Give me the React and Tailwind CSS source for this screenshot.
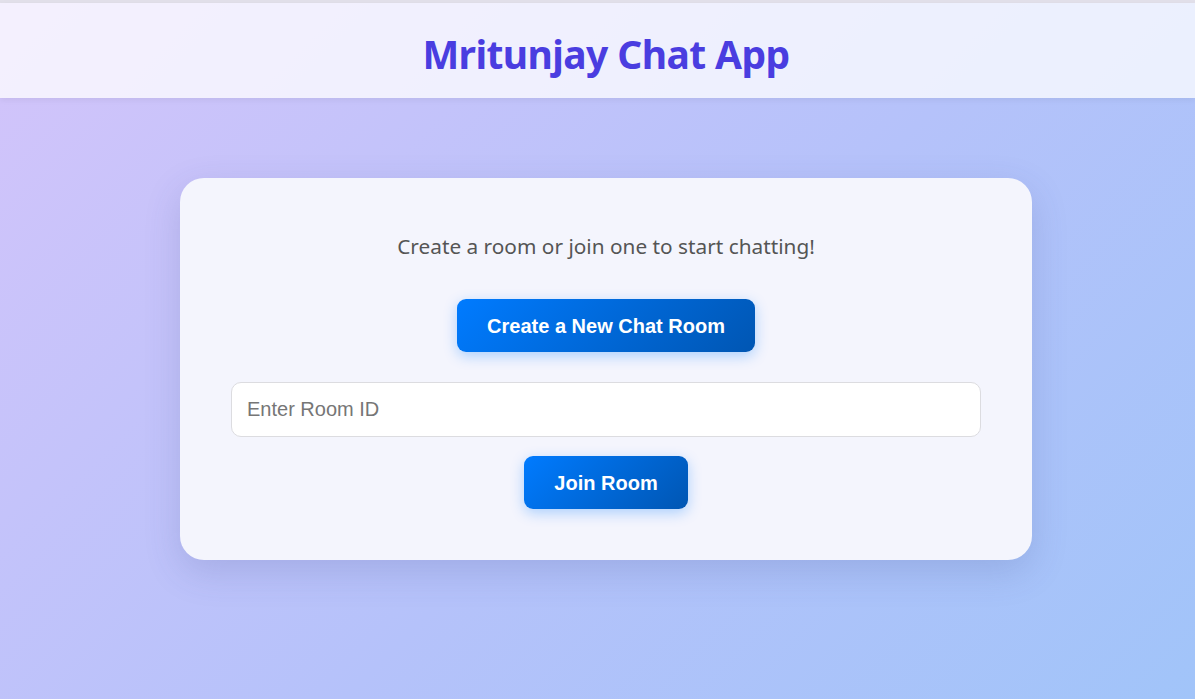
export default function App() {
  return (
    <div className="min-h-[699px] w-full bg-[linear-gradient(135deg,#d3c4fa_0%,#b5c2fa_55%,#a1c4f9_100%)] flex flex-col font-['Noto_Sans',sans-serif]">
      <div className="h-[3px] bg-[#e2e0ea]" />
      <header className="h-[95px] bg-white/75 flex items-center justify-center pl-[17px] pt-[6px] shadow-[0_2px_6px_rgba(0,0,0,0.06)]">
        <h1 className="text-[39px] font-bold text-[#4a3de0] tracking-[-0.6px] leading-none font-['Noto_Sans',sans-serif]">
          Mritunjay Chat App
        </h1>
      </header>
      <main className="flex justify-center pt-[80px] pl-[17px]">
        <div className="w-[852px] h-[382px] rounded-[24px] bg-[#f4f5fd] shadow-[0_12px_36px_rgba(60,70,140,0.18)] px-[51px] pt-[54px] flex flex-col items-center">
          <p className="text-[20.8px] text-[#555] leading-[28px] font-['Noto_Sans',sans-serif]">
            Create a room or join one to start chatting!
          </p>
          <button className="mt-[39px] w-[298px] h-[53px] rounded-[9px] bg-[linear-gradient(135deg,#007bff,#0056b3)] text-white text-[20px] font-bold shadow-[0_4px_14px_rgba(0,123,255,0.3)] font-['Liberation_Sans',Arial,sans-serif]">
            Create a New Chat Room
          </button>
          <input
            placeholder="Enter Room ID"
            className="mt-[30px] w-full h-[55px] rounded-[10px] border border-[#dcdce0] bg-white px-[15px] text-[20px] text-[#333] placeholder:text-[#767676] outline-none font-['Liberation_Sans',Arial,sans-serif]"
          />
          <button className="mt-[19px] w-[164px] h-[53px] rounded-[9px] bg-[linear-gradient(135deg,#007bff,#0056b3)] text-white text-[20px] font-bold shadow-[0_4px_14px_rgba(0,123,255,0.3)] font-['Liberation_Sans',Arial,sans-serif]">
            Join Room
          </button>
        </div>
      </main>
    </div>
  );
}
